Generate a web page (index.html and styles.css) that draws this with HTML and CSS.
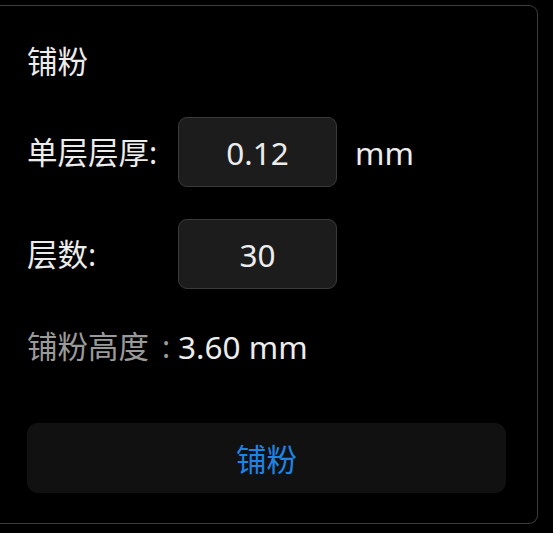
FILE: index.html
```html
<!DOCTYPE html>
<html lang="zh-CN">
<head>
<meta charset="utf-8">
<title>铺粉</title>
<link rel="stylesheet" href="styles.css">
</head>
<body>
<section class="panel">
  <h2 class="title">铺粉</h2>
  <div class="form">
    <span class="label">单层层厚:</span>
    <div class="field">0.12</div>
    <span class="unit">mm</span>

    <span class="label">层数:</span>
    <div class="field">30</div>
    <span></span>

    <span class="label muted">铺粉高度<span class="colon">:</span></span>
    <span class="value">3.60 mm</span>
    <span></span>
  </div>
  <button class="action">铺粉</button>
</section>
</body>
</html>
```
FILE: styles.css
```css
html, body {
  margin: 0;
  padding: 0;
  background: #000;
}
body {
  font-family: "Noto Sans", "Noto Sans CJK SC", sans-serif;
  color: #ececec;
  font-size: 30px;
}
.panel {
  box-sizing: border-box;
  margin-top: 5px;
  width: 538px;
  height: 519px;
  border: 1px solid #3c3c3c;
  border-left: none;
  border-radius: 0 9px 9px 0;
  padding: 35px 31px 0 27px;
  display: flex;
  flex-direction: column;
}
.title {
  margin: 0;
  font-size: 30.5px;
  font-weight: normal;
  line-height: 40px;
  height: 40px;
}
.form {
  margin-top: 36px;
  display: grid;
  grid-template-columns: 151px 159px auto;
  grid-template-rows: 70px 70px 50px;
  row-gap: 32px;
  align-items: center;
}
.label {
  font-size: 30.5px;
  line-height: 40px;
  white-space: nowrap;
}
.colon {
  margin-left: 13px;
}
.muted {
  color: #9a9a9a;
}
.field {
  box-sizing: border-box;
  height: 70px;
  background: #1c1c1c;
  border: 1px solid #3a3a3a;
  border-radius: 9px;
  display: flex;
  align-items: center;
  justify-content: center;
  font-size: 31.5px;
}
.unit {
  margin-left: 18px;
  font-size: 31.5px;
}
.value {
  white-space: nowrap;
  font-size: 31.5px;
}
.action {
  margin-top: 52px;
  height: 70px;
  width: 100%;
  border: none;
  border-radius: 11px;
  background: #111;
  color: #1d84e6;
  font-family: inherit;
  font-size: 30.5px;
  padding: 0;
}
```
